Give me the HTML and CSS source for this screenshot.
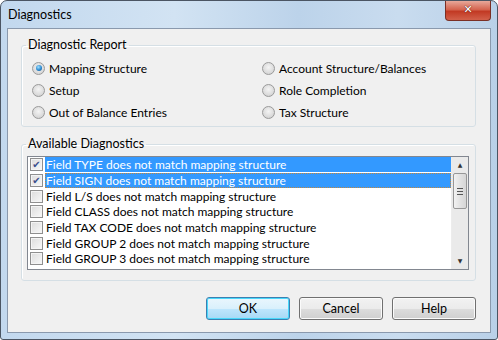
FILE: index.html
```html
<!DOCTYPE html>
<html lang="en">
<head>
  <meta charset="UTF-8">
  <title>Diagnostics</title>
  <link rel="stylesheet" href="styles.css">
</head>
<body>

  <div class="ventana">
    <div class="titulo">
      <span class="titulo-texto">Diagnostics</span>
      <span class="cerrar">&#x2715;</span>
    </div>

    <div class="cliente">
      <!-- Diagnostic Report -->
      <fieldset class="grupo grupo-reporte">
        <legend>Diagnostic Report</legend>
        <div class="radios">
          <label class="radio"><span class="circulo marcado"></span>Mapping Structure</label>
          <label class="radio"><span class="circulo"></span>Account Structure/Balances</label>
          <label class="radio"><span class="circulo"></span>Setup</label>
          <label class="radio"><span class="circulo"></span>Role Completion</label>
          <label class="radio"><span class="circulo"></span>Out of Balance Entries</label>
          <label class="radio"><span class="circulo"></span>Tax Structure</label>
        </div>
      </fieldset>

      <!-- Available Diagnostics -->
      <fieldset class="grupo grupo-lista">
        <legend>Available Diagnostics</legend>
        <div class="lista">
          <ul class="filas">
            <li class="sel"><span class="caja marcada">&#x2714;</span><span class="texto">Field TYPE does not match mapping structure</span></li>
            <li class="sel foco"><span class="caja marcada">&#x2714;</span><span class="texto">Field SIGN does not match mapping structure</span></li>
            <li><span class="caja"></span><span class="texto">Field L/S does not match mapping structure</span></li>
            <li><span class="caja"></span><span class="texto">Field CLASS does not match mapping structure</span></li>
            <li><span class="caja"></span><span class="texto">Field TAX CODE does not match mapping structure</span></li>
            <li><span class="caja"></span><span class="texto">Field GROUP 2 does not match mapping structure</span></li>
            <li><span class="caja"></span><span class="texto">Field GROUP 3 does not match mapping structure</span></li>
          </ul>
          <div class="scroll">
            <span class="flecha">&#x25B2;</span>
            <div class="carril"><div class="pulgar"><span class="grip"></span></div></div>
            <span class="flecha">&#x25BC;</span>
          </div>
        </div>
      </fieldset>

      <div class="botones">
        <button class="boton defecto">OK</button>
        <button class="boton">Cancel</button>
        <button class="boton">Help</button>
      </div>
    </div>
  </div>

</body>
</html>
```
FILE: styles.css
```css
body {
  margin: 0;
  font-family: 'Lato', 'Open Sans', sans-serif;
  font-size: 12px;
  color: #000;
  background: #fff;
}

.ventana {
  width: 498px;
  height: 340px;
  box-sizing: border-box;
  border: 1px solid #4b5563;
  border-radius: 7px 7px 3px 3px;
  background: linear-gradient(90deg, #c2d8ee 0%, #d2e3f3 35%, #bcd3ea 60%, #c9dcef 80%, #b9d0e8 100%);
  display: flex;
  flex-direction: column;
  overflow: hidden;
}

.titulo {
  height: 27px;
  display: flex;
  align-items: flex-start;
  justify-content: space-between;
  padding-left: 7px;
}

.titulo-texto {
  margin-top: 6px;
  font-size: 12.5px;
}

.cerrar {
  width: 44px;
  height: 19px;
  margin-right: 6px;
  background: linear-gradient(#e7a89a 0%, #d4644f 45%, #c23a24 55%, #d2604a 100%);
  border: 1px solid #7a2f25;
  border-top: none;
  border-radius: 0 0 4px 4px;
  color: #fff;
  font-family: 'DejaVu Sans', sans-serif;
  font-weight: bold;
  font-size: 11px;
  text-align: center;
  line-height: 18px;
  text-shadow: 0 0 1px #5a1a12, 0 0 1px #5a1a12;
}

.cliente {
  flex: 1;
  margin: 0 6px 6px 6px;
  border: 1px solid #8a99ad;
  background: #f0f0f0;
  padding: 9px 14px 0 13px;
}

.grupo {
  margin: 0;
  padding: 0;
  border: 1px solid #d5dfe5;
  border-radius: 3px;
  box-shadow: inset 1px 1px 0 #fff;
}

.grupo legend {
  padding: 0 2px;
  margin-left: 4px;
  line-height: 14px;
  font-size: 12.5px;
}

.grupo-reporte {
  height: 89px;
  box-sizing: border-box;
}

.radios {
  display: grid;
  grid-template-columns: 230px 1fr;
  grid-auto-rows: 22px;
  padding: 5px 0 0 10px;
}

.radio {
  display: flex;
  align-items: center;
  gap: 4px;
}

.circulo {
  width: 11px;
  height: 11px;
  border-radius: 50%;
  border: 1px solid #9a9a9a;
  background: radial-gradient(circle at 50% 40%, #f4f4f4 0%, #dcdcdc 60%, #c8c8c8 100%);
  display: inline-block;
  position: relative;
}

.circulo.marcado::after {
  content: "";
  position: absolute;
  left: 2.5px;
  top: 2.5px;
  width: 6px;
  height: 6px;
  border-radius: 50%;
  background: radial-gradient(circle at 40% 35%, #9fe0ff 0%, #2c8ad1 55%, #0b4c85 100%);
}

.grupo-lista {
  margin-top: 10px;
  height: 144px;
  box-sizing: border-box;
}

.lista {
  margin: 5px 6px 0 5px;
  height: 114px;
  box-sizing: border-box;
  border: 1px solid #828790;
  background: #fff;
  display: flex;
}

.filas {
  flex: 1;
  list-style: none;
  margin: 0;
  padding: 0;
}

.filas li {
  height: 15.7px;
  display: flex;
  align-items: center;
  padding-left: 2px;
  white-space: nowrap;
}

.caja {
  width: 11px;
  height: 11px;
  border: 1px solid #8f8f8f;
  background: linear-gradient(135deg, #dcdcdc, #f8f8f8);
  box-shadow: inset 0 0 0 1px #f4f4f4;
  font-family: 'DejaVu Sans', sans-serif;
  font-size: 10px;
  line-height: 11px;
  text-align: center;
  color: #3b4f8c;
  flex: none;
}

.texto {
  margin-left: 2px;
  padding: 0 1px;
  line-height: 15px;
  flex: 1;
}

.sel .texto {
  background: #3399ff;
  color: #fff;
}

.foco .texto {
  outline: 1px dotted #c08640;
  outline-offset: -1px;
}

.scroll {
  width: 16px;
  background: #eaeaea;
  border-left: 1px solid #ececec;
  display: flex;
  flex-direction: column;
  align-items: center;
}

.flecha {
  height: 16px;
  font-family: 'DejaVu Sans', sans-serif;
  font-size: 6px;
  line-height: 16px;
  color: #333;
}

.carril {
  flex: 1;
  width: 100%;
}

.pulgar {
  margin: 0 1px;
  height: 34px;
  border: 1px solid #979797;
  border-radius: 2px;
  background: linear-gradient(90deg, #f2f2f2, #e2e2e2 50%, #d6d6d6);
  display: flex;
  align-items: center;
  justify-content: center;
}

.grip {
  width: 6px;
  height: 5px;
  border-top: 1px solid #555;
  border-bottom: 1px solid #555;
  position: relative;
}

.grip::after {
  content: "";
  position: absolute;
  left: 0;
  right: 0;
  top: 2px;
  border-top: 1px solid #555;
}

.botones {
  display: flex;
  justify-content: flex-end;
  gap: 9px;
  margin-top: 16px;
}

.boton {
  width: 84px;
  height: 23px;
  font-family: inherit;
  font-size: 12.5px;
  color: #000;
  border: 1px solid #707070;
  border-radius: 3px;
  background: linear-gradient(#f2f2f2 0%, #ebebeb 50%, #dddddd 51%, #cfcfcf 100%);
  box-shadow: inset 0 0 0 1px #fbfbfb;
  padding: 0;
}

.boton.defecto {
  border-color: #3c7fb1;
  box-shadow: inset 0 0 0 1px #48d8fb;
  background: linear-gradient(#eaf6fd 0%, #d9f0fc 50%, #bee6fd 51%, #a7d9f5 100%);
}
```
